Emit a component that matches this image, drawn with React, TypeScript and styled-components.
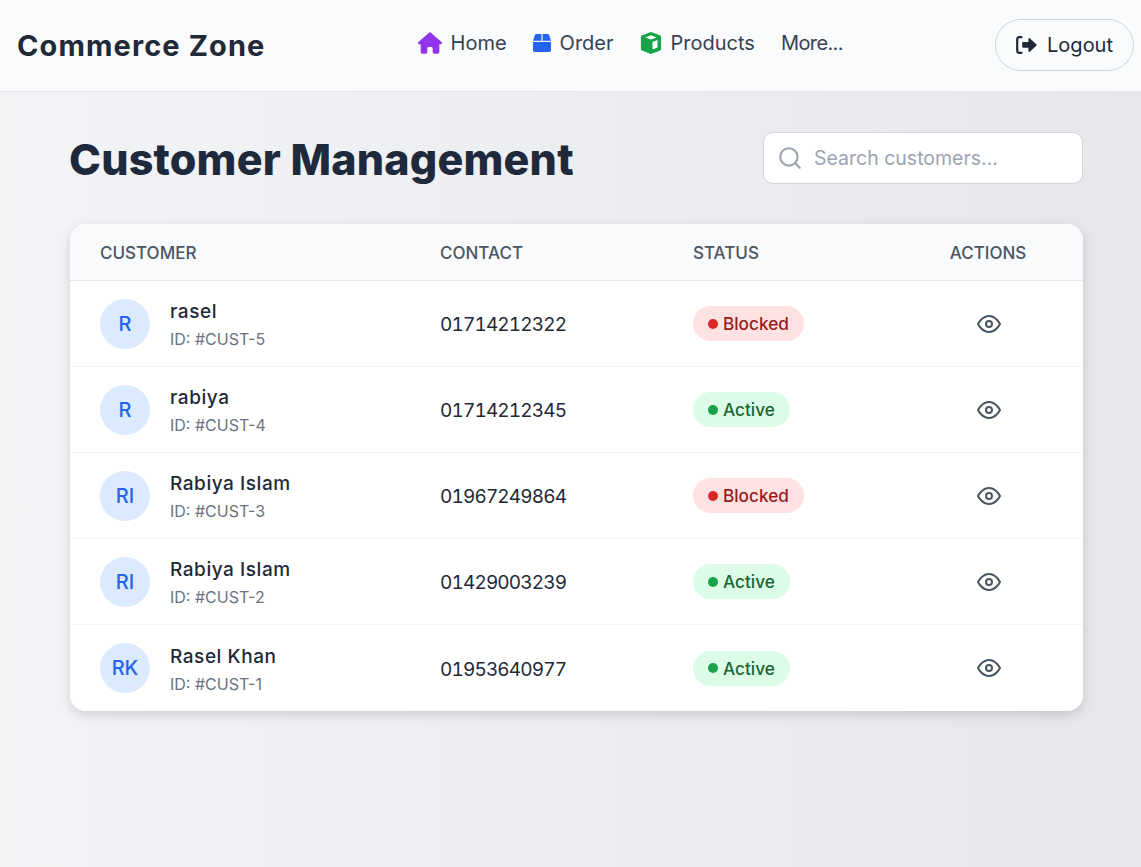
import React from 'react';
import styled, { createGlobalStyle } from 'styled-components';
import { FaBox } from 'react-icons/fa';
import { FaHouse } from 'react-icons/fa6';
import { FiSearch, FiEye } from 'react-icons/fi';

const GlobalStyle = createGlobalStyle`
  html, body { margin: 0; padding: 0; }
  body {
    min-height: 867px;
    font-family: Inter, "Liberation Sans", sans-serif;
    color: #1f2937;
    background: linear-gradient(to right, #f3f4f6, #e5e7eb);
    overflow: hidden;
  }
`;

const TopBar = styled.header`
  height: 90px;
  display: flex;
  align-items: center;
  justify-content: space-between;
  padding: 0 7px 1px 17px;
  background: #fafbfd;
  border-bottom: 1px solid #e5e7eb;
`;

const Logo = styled.div`
  font-size: 29px;
  font-weight: 700;
  color: #1f2937;
  letter-spacing: 1.1px;
`;

const NavList = styled.nav`
  display: flex;
  align-items: center;
  gap: 26px;
  margin-bottom: 4px;
`;

const NavLink = styled.a<{ $tight?: boolean }>`
  display: flex;
  align-items: center;
  gap: 9px;
  font-size: 20px;
  color: #374151;
  letter-spacing: ${(p) => (p.$tight ? '-0.6px' : '0')};
  & svg { flex: none; }
`;

const LogoutButton = styled.button`
  display: flex;
  align-items: center;
  gap: 10px;
  height: 52px;
  padding: 0 20px;
  border: 1px solid #d1d5db;
  border-radius: 26px;
  background: transparent;
  font: inherit;
  font-size: 20px;
  color: #1f2937;
`;

const Main = styled.main`
  padding: 40px 58px 0 70px;
`;

const PageHead = styled.div`
  display: flex;
  align-items: center;
  justify-content: space-between;
  margin-bottom: 40px;
`;

const Title = styled.h1`
  margin: 0 0 0 -1px;
  padding-top: 2px;
  font-size: 43px;
  line-height: 50px;
  font-weight: 800;
  color: #1e293b;
  letter-spacing: 0.2px;
`;

const SearchBox = styled.div`
  box-sizing: border-box;
  width: 320px;
  height: 52px;
  display: flex;
  align-items: center;
  gap: 11px;
  padding: 0 13px;
  background: #fff;
  border: 1px solid #d1d5db;
  border-radius: 10px;
  font-size: 19.5px;
  color: #9ca3af;
`;

const Card = styled.section`
  background: #fff;
  border-radius: 16px;
  overflow: hidden;
  box-shadow: 0 4px 12px rgba(0, 0, 0, 0.15);
`;

const Row = styled.div<{ $head?: boolean }>`
  display: grid;
  grid-template-columns: 370px 253px 200px 190px;
  align-items: center;
  box-sizing: border-box;
  height: ${(p) => (p.$head ? '57px' : '86px')};
  background: ${(p) => (p.$head ? '#f9fafb' : '#fff')};
  border-bottom: 1px solid ${(p) => (p.$head ? '#e5e7eb' : '#f3f4f6')};
  &:last-child { border-bottom: 0; }
`;

const HeadCell = styled.div<{ $center?: boolean; $first?: boolean }>`
  font-size: 17px;
  font-weight: 500;
  color: #4b5563;
  padding-top: 2px;
  padding-left: ${(p) => (p.$first ? '30px' : '0')};
  text-align: ${(p) => (p.$center ? 'center' : 'left')};
`;

const CustomerCell = styled.div`
  display: flex;
  align-items: center;
  gap: 20px;
  padding-left: 30px;
`;

const Avatar = styled.div`
  width: 50px;
  height: 50px;
  border-radius: 50%;
  display: flex;
  align-items: center;
  justify-content: center;
  background: #dbeafe;
  color: #2563eb;
  font-size: 20px;
  font-weight: 500;
`;

const CustomerText = styled.div`
  padding-top: 3px;
`;

const Name = styled.div`
  font-size: 19px;
  font-weight: 500;
  line-height: 24px;
  letter-spacing: 0.55px;
  color: #1f2937;
  margin-bottom: 4px;
`;

const CustId = styled.div`
  font-size: 16px;
  line-height: 22px;
  color: #6b7280;
`;

const Phone = styled.div`
  font-size: 19px;
  font-variant-numeric: tabular-nums;
  letter-spacing: -0.85px;
  padding-top: 2px;
  color: #1f2937;
`;

const Badge = styled.span<{ $blocked?: boolean }>`
  display: inline-flex;
  align-items: center;
  gap: 5px;
  height: 35px;
  padding: 0 15px;
  border-radius: 18px;
  font-size: 17.2px;
  font-weight: 500;
  background: ${(p) => (p.$blocked ? '#fee2e2' : '#dcfce7')};
  color: ${(p) => (p.$blocked ? '#991b1b' : '#166534')};
  &::before {
    content: '';
    width: 10px;
    height: 10px;
    border-radius: 50%;
    background: ${(p) => (p.$blocked ? '#dc2626' : '#16a34a')};
  }
`;

const ActionCell = styled.div`
  display: flex;
  justify-content: center;
  color: #4b5563;
  padding-left: 1px;
`;

const ProductsIcon = () => (
  <svg width="22" height="22" viewBox="0 0 22 22">
    <path fill="#16a34a" d="M11 0l9.2 3.6a1.5 1.5 0 0 1 .9 1.4v12a1.5 1.5 0 0 1-.9 1.4L11 22l-9.2-3.6A1.5 1.5 0 0 1 .9 17V5a1.5 1.5 0 0 1 .9-1.4z" />
    <path fill="#fff" d="M11 3.2l5.6 2.2L11 7.6 5.4 5.4zM12.5 10l5-2v7.5l-5 2z" />
  </svg>
);

const LogoutIcon = () => (
  <svg width="21" height="18" viewBox="0 0 21 18">
    <path fill="none" stroke="currentColor" strokeWidth="2.2" strokeLinecap="round" d="M5.5 1.2H3.5A2.3 2.3 0 0 0 1.2 3.5v11a2.3 2.3 0 0 0 2.3 2.3h2" />
    <path fill="currentColor" d="M13 2.2a1 1 0 0 1 1.1.2l6.2 5.9a1 1 0 0 1 0 1.4l-6.2 5.9a1 1 0 0 1-1.7-.7v-3.2H7.2a1 1 0 0 1-1-1V7a1 1 0 0 1 1-1h5.2V3.1a1 1 0 0 1 .6-.9z" />
  </svg>
);

const customers = [
  { initials: 'R', name: 'rasel', id: 'ID: #CUST-5', phone: '01714212322', blocked: true },
  { initials: 'R', name: 'rabiya', id: 'ID: #CUST-4', phone: '01714212345', blocked: false },
  { initials: 'RI', name: 'Rabiya Islam', id: 'ID: #CUST-3', phone: '01967249864', blocked: true },
  { initials: 'RI', name: 'Rabiya Islam', id: 'ID: #CUST-2', phone: '01429003239', blocked: false },
  { initials: 'RK', name: 'Rasel Khan', id: 'ID: #CUST-1', phone: '01953640977', blocked: false },
];

const App: React.FC = () => {
  return (
    <>
      <GlobalStyle />
      <TopBar>
        <Logo>Commerce Zone</Logo>
        <NavList>
          <NavLink><FaHouse size={24} color="#9333ea" />Home</NavLink>
          <NavLink><FaBox size={18} color="#2563eb" />Order</NavLink>
          <NavLink><ProductsIcon />Products</NavLink>
          <NavLink $tight>More...</NavLink>
        </NavList>
        <LogoutButton><LogoutIcon />Logout</LogoutButton>
      </TopBar>
      <Main>
        <PageHead>
          <Title>Customer Management</Title>
          <SearchBox><FiSearch size={26} />Search customers...</SearchBox>
        </PageHead>
        <Card>
          <Row $head>
            <HeadCell $first>CUSTOMER</HeadCell>
            <HeadCell>CONTACT</HeadCell>
            <HeadCell>STATUS</HeadCell>
            <HeadCell $center>ACTIONS</HeadCell>
          </Row>
          {customers.map((c) => (
            <Row key={c.id}>
              <CustomerCell>
                <Avatar>{c.initials}</Avatar>
                <CustomerText>
                  <Name>{c.name}</Name>
                  <CustId>{c.id}</CustId>
                </CustomerText>
              </CustomerCell>
              <Phone>{c.phone}</Phone>
              <div><Badge $blocked={c.blocked}>{c.blocked ? 'Blocked' : 'Active'}</Badge></div>
              <ActionCell><FiEye size={24} /></ActionCell>
            </Row>
          ))}
        </Card>
      </Main>
    </>
  );
};

export default App;
